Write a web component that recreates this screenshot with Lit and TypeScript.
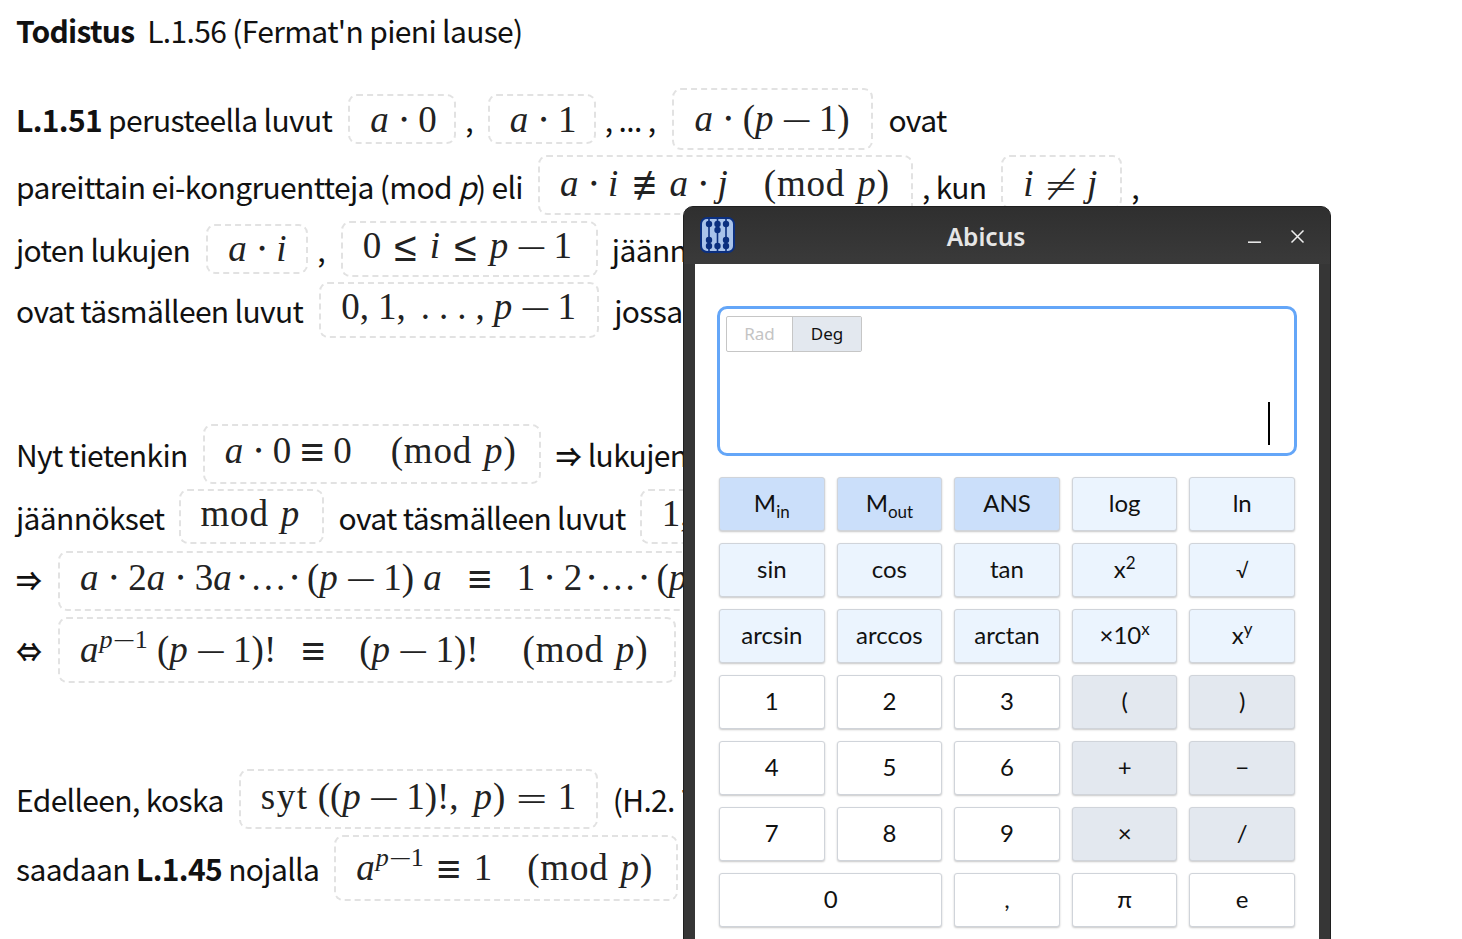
import { LitElement, html, css, TemplateResult } from "lit";
import { customElement } from "lit/decorators.js";

type Item =
  | { kind: "t"; c: TemplateResult | string; base: number; ml: number }
  | { kind: "m"; c: TemplateResult; top: number; bottom: number; base: number; w: number; ml: number; pl?: number };
type Row = { top: number; items: Item[] };

const t = (c: TemplateResult | string, base: number, ml = 0): Item => ({ kind: "t", c, base, ml });
const m = (c: TemplateResult, top: number, bottom: number, base: number, w: number, ml: number, pl = 22): Item => ({ kind: "m", c, top, bottom, base, w, ml, pl });

const B = html`<span class="b">⋅</span>`;
const MIN = html`<span class="sym minus">−</span>`;
const R = (s: string) => html`<span class="sym r">${s}</span>`;
const RL = (s: string) => html`<span class="sym rl">${s}</span>`;
const RR = html`<span class="sym rr">≡</span>`;
const MOD = (ml: number) => html`<span style="margin-left:${ml}px"><span class="mw">(mod</span><i>p</i>)</span>`;
const P1 = html`(<i>p</i>${MIN}1)`;
const APOW = html`<i>a</i><sup class="ms"><i>p</i><span class="sym sm">−</span>1</sup>`;
const DOTS = html`<span class="dots">...</span>`;
const CDOTS = html`<span class="cd">⋅...⋅</span>`;
const ARR = (s: string) => html`<span class="arr">${s}</span>`;

const ROWS: Row[] = [
  { top: 88, items: [
    t(html`<b>L.1.51</b> perusteella luvut`, 132),
    m(html`<i>a</i>${B}0`, 94, 144, 132, 108, 16),
    t(",", 132, 9),
    m(html`<i>a</i>${B}1`, 94, 144, 132, 108, 15),
    t(", ... ,", 132, 9),
    m(html`<i>a</i>${B}${P1}`, 88, 150, 131, 201, 17),
    t("ovat", 132, 15),
  ] },
  { top: 155, items: [
    t(html`pareittain ei-kongruentteja (mod <i class="ti">p</i>) eli`, 199),
    m(html`<i>a</i>${B}<i>i</i><span class="sym rn">≢</span><i>a</i>${B}<i>j</i>${MOD(35)}`, 155, 215, 196, 375, 15),
    t(", kun", 199, 9),
    m(html`<i>i</i>${R("≠")}<i>j</i>`, 155, 209, 196, 121, 15),
    t(",", 199, 9),
  ] },
  { top: 221, items: [
    t("joten lukujen", 262),
    m(html`<i>a</i>${B}<i>i</i>`, 224, 274, 261, 102, 16),
    t(",", 262, 9),
    m(html`0${RL("≤")}<i>i</i>${RL("≤")}<i>p</i>${MIN}1`, 221, 277, 258, 257, 16),
    t("jäännökset", 262, 14),
  ] },
  { top: 282, items: [
    t("ovat täsmälleen luvut", 323),
    m(html`0,<span class="c"></span>1,<span class="c"></span>${DOTS},<span class="c"></span><i>p</i>${MIN}1`, 282, 338, 319, 280, 16),
    t("jossa", 323, 15),
  ] },
  { top: 424, items: [
    t("Nyt tietenkin", 467),
    m(html`<i>a</i>${B}0${R("≡")}0${MOD(39)}`, 424, 484, 463, 338, 15),
    t(html`${ARR("⇒")} lukujen`, 467, 15),
  ] },
  { top: 489, items: [
    t("jäännökset", 530),
    m(html`<span class="mw">mod</span><i>p</i>`, 489, 544, 526, 145, 14),
    t("ovat täsmälleen luvut", 530, 15),
    m(html`1,<span class="c"></span>2,<span class="c"></span>${DOTS},<span class="c"></span><i>p</i>${MIN}1`, 489, 544, 526, 280, 14),
  ] },
  { top: 551, items: [
    t(ARR("⇒"), 591),
    m(html`<i>a</i>${B}2<i>a</i>${B}3<i>a</i>${CDOTS}${P1} <i>a</i>${RR}1${B}2${CDOTS}${P1}`, 551, 611, 590, 760, 16),
  ] },
  { top: 617, items: [
    t(ARR("⇔"), 662),
    m(html`${APOW} ${P1}!${RR}<span class="c"></span>${P1}!${MOD(44)}`, 617, 683, 662, 618, 16),
  ] },
  { top: 769, items: [
    t("Edelleen, koska", 812),
    m(html`<span class="syt">syt</span> ((<i>p</i>${MIN}1)!,<span class="c2"></span><i>p</i>)${R("=")}1`, 769, 829, 809, 359, 15),
    t("(H.2. 7)", 812, 15),
  ] },
  { top: 835, items: [
    t(html`saadaan <b>L.1.45</b> nojalla`, 881),
    m(html`${APOW}${RL("≡")}1${MOD(35)}`, 835, 901, 880, 344, 15),
  ] },
];

const KEYS: { c: TemplateResult | string; k: string; span?: boolean }[] = [
  { c: html`M<sub>in</sub>`, k: "blue" }, { c: html`M<sub>out</sub>`, k: "blue" }, { c: "ANS", k: "blue" }, { c: "log", k: "light" }, { c: "ln", k: "light" },
  { c: "sin", k: "light" }, { c: "cos", k: "light" }, { c: "tan", k: "light" }, { c: html`x<sup>2</sup>`, k: "light" }, { c: html`<span class="sq">√</span>`, k: "light" },
  { c: "arcsin", k: "light" }, { c: "arccos", k: "light" }, { c: "arctan", k: "light" }, { c: html`×10<sup>x</sup>`, k: "light" }, { c: html`x<sup>y</sup>`, k: "light" },
  { c: "1", k: "white" }, { c: "2", k: "white" }, { c: "3", k: "white" }, { c: "(", k: "grey" }, { c: ")", k: "grey" },
  { c: "4", k: "white" }, { c: "5", k: "white" }, { c: "6", k: "white" }, { c: "+", k: "grey" }, { c: "−", k: "grey" },
  { c: "7", k: "white" }, { c: "8", k: "white" }, { c: "9", k: "white" }, { c: "×", k: "grey" }, { c: "/", k: "grey" },
  { c: "0", k: "white", span: true }, { c: ",", k: "white" }, { c: "π", k: "white" }, { c: "e", k: "white" },
];

const TEXT_SIZE = 30;
const TEXT_BASE = TEXT_SIZE * 0.936;
const MATH_SIZE = 37;
const MATH_BASE = MATH_SIZE * 0.8375;

@customElement("app-root")
export class AppRoot extends LitElement {
  static styles = css`
    :host { display: block; position: relative; height: 939px; overflow: hidden; background: #fff; color: #111; font-family: "Noto Sans CJK JP", "Noto Sans", sans-serif; }
    .doc { padding: 0 0 0 16px; }
    .title { font-size: 30px; line-height: 30px; padding-top: 15px; white-space: pre; height: 71px; box-sizing: border-box; letter-spacing: -0.65px; }
    .title b { font-weight: 700; margin-right: 13px; letter-spacing: -0.75px; }
    .row { display: flex; align-items: flex-start; white-space: pre; }
    .text { font-size: ${TEXT_SIZE}px; line-height: ${TEXT_SIZE}px; flex: none; letter-spacing: -0.65px; }
    .text b { font-weight: 700; }
    .text .ti { font-style: italic; }
    .arr { font-size: 26px; font-weight: 700; letter-spacing: 0; }
    .box { flex: none; box-sizing: border-box; border: 2px dashed #e2e2e2; border-radius: 9px; overflow: hidden; font-family: "Liberation Serif", "DejaVu Serif", serif; font-size: ${MATH_SIZE}px; line-height: ${MATH_SIZE}px; color: #222; }
    .box i { font-style: italic; margin-right: 1px; }
    .sym { font-family: "DejaVu Sans", sans-serif; font-weight: 200; font-size: 41px; line-height: 0; vertical-align: -3px; }
    .b { margin: 0 8px; }
    .minus { margin: 0 5px; }
    .r { margin: 0 9px; }
    .rl { margin: 0 13px; }
    .rn { margin: 0 -4px 0 13px; }
    .rr { margin: 0 25px; }
    .mw { letter-spacing: 0.8px; margin-right: 12px; }
    .syt { letter-spacing: 1.500px; }
    .c { margin-left: 9px; }
    .c2 { margin-left: 15px; }
    .dots { letter-spacing: 9px; margin-left: 6px; }
    .cd { letter-spacing: 3px; margin: 0 3px; }
    .ms { font-size: 26px; line-height: 0; vertical-align: 14px; }
    .ms .sm { font-size: 30px; vertical-align: -2px; margin: 0 -2px; }
    .window { position: absolute; left: 683px; top: 206px; width: 648px; height: 780px; box-sizing: border-box; background: #363636; border: 1px solid #1f1f1f; border-radius: 10px 10px 0 0; padding: 0 11px; display: flex; flex-direction: column; }
    .titlebar { height: 57px; flex: none; display: grid; grid-template-columns: 1fr auto 1fr; align-items: center; background: linear-gradient(#2f2f2f, #3a3a3a); margin: 0 -11px; padding: 0 25px 0 16px; border-radius: 9px 9px 0 0; }
    .titlebar svg.logo { width: 35px; height: 36px; display: block; margin-top: -2px; }
    .name { font-family: "Noto Sans", sans-serif; font-weight: 600; font-size: 24.500px; color: #e6e6e6; transform: translate(-16.500px, 2px); line-height: 1; }
    .ctl { justify-self: end; display: flex; align-items: center; gap: 28px; margin-top: 1px; }
    .ctl svg { display: block; }
    .content { flex: 1; background: #fff; padding: 42px 22px 0; }
    .display { height: 150px; box-sizing: border-box; border: 3px solid #64a6f8; border-radius: 10px; padding: 7px 6px; position: relative; }
    .toggle { display: inline-flex; height: 36px; box-sizing: border-box; border: 1px solid #c6c6c6; border-radius: 2px; font-family: "Noto Sans", sans-serif; font-size: 17px; }
    .toggle span { display: flex; align-items: center; justify-content: center; padding-bottom: 2px; }
    .rad { width: 65px; color: #c4c4c4; border-right: 1px solid #c6c6c6; }
    .deg { width: 68px; background: #e3e8ef; color: #111; }
    .cursor { position: absolute; right: 24px; bottom: 8px; width: 2px; height: 43px; background: #000; }
    .keys { display: grid; grid-template-columns: repeat(5, 1fr); grid-auto-rows: 54px; gap: 12px; margin: 21px 2px 0; }
    .key { box-sizing: border-box; border: 1px solid #d0d4da; border-radius: 3px; box-shadow: 0 1px 2px rgba(0,0,0,.22); display: flex; align-items: center; justify-content: center; font-family: "Lato", sans-serif; font-size: 24px; color: #111; line-height: 1; padding-bottom: 2px; }
    .key sub, .key sup { font-size: 17px; line-height: 0; }
    .key .sq { font-size: 20px; }
    .key.blue { background: #cbdffa; }
    .key.light { background: #ebf4fe; }
    .key.white { background: #fff; }
    .key.grey { background: #e3e8ef; }
    .key.span { grid-column: span 2; }
  `;

  private item(i: Item, rowTop: number) {
    if (i.kind === "t") {
      const mt = i.base - rowTop - TEXT_BASE;
      return html`<span class="text" style="margin-top:${mt}px;margin-left:${i.ml}px">${i.c}</span>`;
    }
    const s = `margin-top:${i.top - rowTop}px;margin-left:${i.ml}px;width:${i.w}px;height:${i.bottom - i.top}px;padding-top:${i.base - i.top - 2 - MATH_BASE}px;padding-left:${(i.pl ?? 22) - 2}px`;
    return html`<span class="box" style=${s}>${i.c}</span>`;
  }

  private logo() {
    return html`<svg class="logo" viewBox="0 0 35 36" aria-hidden="true">
      <rect x="1" y="1" width="33" height="34" rx="6" fill="#a9c3ea" stroke="#0b2f7f" stroke-width="2"/>
      <path d="M9 2v32M17.500 2v32M26 2v32" stroke="#0b2f7f" stroke-width="1.600" fill="none"/>
      <g fill="#0b2f7f">
        <circle cx="9" cy="7" r="3.200"/><circle cx="17.500" cy="7" r="3.200"/><circle cx="26" cy="7" r="3.200"/>
        <circle cx="17.500" cy="13" r="3.200"/>
        <circle cx="9" cy="23" r="3.200"/><circle cx="26" cy="23" r="3.200"/>
        <circle cx="9" cy="29" r="3.200"/><circle cx="17.500" cy="29" r="3.200"/><circle cx="26" cy="29" r="3.200"/>
      </g>
    </svg>`;
  }

  render() {
    let prev = 0;
    return html`
      <div class="doc">
        <div class="title"><b>Todistus</b>L.1.56 (Fermat'n pieni lause)</div>
        <div class="rows">
          ${ROWS.map((r, idx) => {
            const first = idx === 0 ? 71 : prev;
            const bottom = Math.max(...r.items.map((i) => (i.kind === "m" ? i.bottom : 0)));
            prev = bottom;
            return html`<div class="row" style="margin-top:${r.top - first}px;height:${bottom - r.top}px">${r.items.map((i) => this.item(i, r.top))}</div>`;
          })}
        </div>
      </div>
      <div class="window">
        <div class="titlebar">
          ${this.logo()}
          <div class="name">Abicus</div>
          <div class="ctl">
            <svg width="14" height="14" viewBox="0 0 14 14"><path d="M0 13.200h13" stroke="#e6e6e6" stroke-width="1.600"/></svg>
            <svg width="15" height="15" viewBox="0 0 15 15"><path d="M1.500 1.500l12 12M13.500 1.500l-12 12" stroke="#efefef" stroke-width="1.500"/></svg>
          </div>
        </div>
        <div class="content">
          <div class="display">
            <div class="toggle"><span class="rad">Rad</span><span class="deg">Deg</span></div>
            <div class="cursor"></div>
          </div>
          <div class="keys">
            ${KEYS.map((k) => html`<div class="key ${k.k} ${k.span ? "span" : ""}"><span>${k.c}</span></div>`)}
          </div>
        </div>
      </div>
    `;
  }
}
